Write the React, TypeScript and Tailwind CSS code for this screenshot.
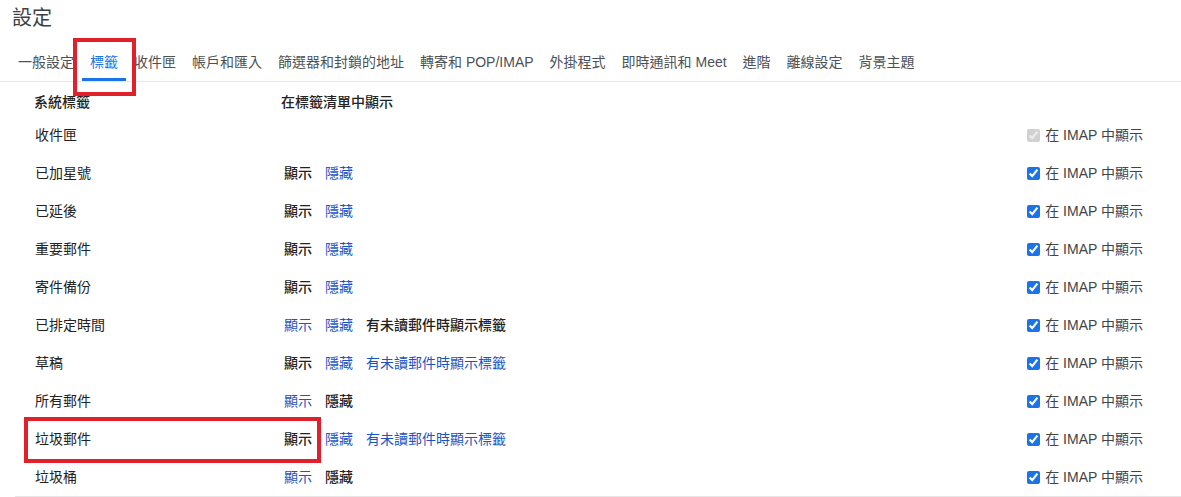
import React from "react";

type Opt = "on" | "link" | "none";

type Row = {
  label: string;
  show?: Opt;
  hide?: Opt;
  unread?: Opt;
  imapDisabled?: boolean;
};

const tabs = [
  "一般設定",
  "標籤",
  "收件匣",
  "帳戶和匯入",
  "篩選器和封鎖的地址",
  "轉寄和 POP/IMAP",
  "外掛程式",
  "即時通訊和 Meet",
  "進階",
  "離線設定",
  "背景主題",
];

const rows: Row[] = [
  { label: "收件匣", imapDisabled: true },
  { label: "已加星號", show: "on", hide: "link" },
  { label: "已延後", show: "on", hide: "link" },
  { label: "重要郵件", show: "on", hide: "link" },
  { label: "寄件備份", show: "on", hide: "link" },
  { label: "已排定時間", show: "link", hide: "link", unread: "on" },
  { label: "草稿", show: "on", hide: "link", unread: "link" },
  { label: "所有郵件", show: "link", hide: "on" },
  { label: "垃圾郵件", show: "on", hide: "link", unread: "link" },
  { label: "垃圾桶", show: "link", hide: "on" },
];

function Choice({ text, state }: { text: string; state?: Opt }) {
  if (!state || state === "none") return null;
  return state === "on" ? (
    <span className="font-medium text-[#222]">{text}</span>
  ) : (
    <span className="text-[#1a55c4] cursor-pointer">{text}</span>
  );
}

export default function App() {
  return (
    <div
      className="relative w-[1181px] h-[497px] overflow-hidden bg-white text-[14px] text-[#222]"
      style={{ fontFamily: '"Liberation Sans", "Noto Sans CJK TC", sans-serif' }}
    >
      <h1 className="pl-[12px] pt-[4px] h-[38px] text-[20px] leading-[28px] text-[#3c4043]">
        設定
      </h1>

      {/* tab strip */}
      <div className="flex h-[44px] border-b border-[#e6e6e6] pl-[10px]">
        {tabs.map((t) => (
          <div
            key={t}
            className={
              t === "標籤"
                ? "flex items-center px-2 pt-[8px] border-b-[3px] border-[#1a73e8] text-[#1a73e8]"
                : "flex items-center px-2 pt-[8px] border-b-[3px] border-transparent text-[#4d5156]"
            }
          >
            {t}
          </div>
        ))}
      </div>

      {/* label table */}
      <div className="ml-[15px] border-b border-[#e6e6e6]">
        <div className="flex h-[34px] pt-[10px] pl-[19px] font-medium text-[#222]">
          <div className="w-[247px]">系統標籤</div>
          <div>在標籤清單中顯示</div>
        </div>
        {rows.map((r) => (
          <div key={r.label} className="flex items-center h-[38px] pl-[20px] pr-[38px]">
            <div className="w-[249px]">{r.label}</div>
            <div className="flex gap-[13px]">
              <Choice text="顯示" state={r.show} />
              <Choice text="隱藏" state={r.hide} />
              <Choice text="有未讀郵件時顯示標籤" state={r.unread} />
            </div>
            <label className="ml-auto flex items-center gap-[5px] text-[#444]">
              <input
                type="checkbox"
                defaultChecked
                disabled={r.imapDisabled}
                className="m-0 w-[13px] h-[13px] accent-[#1a73e8]"
              />
              在 IMAP 中顯示
            </label>
          </div>
        ))}
      </div>

      {/* annotation boxes */}
      <div className="absolute left-[73px] top-[38px] w-[63px] h-[58px] border-[4px] border-[#e0202a]" />
      <div className="absolute left-[24px] top-[417px] w-[297px] h-[46px] border-[4px] border-[#e0202a]" />
    </div>
  );
}
